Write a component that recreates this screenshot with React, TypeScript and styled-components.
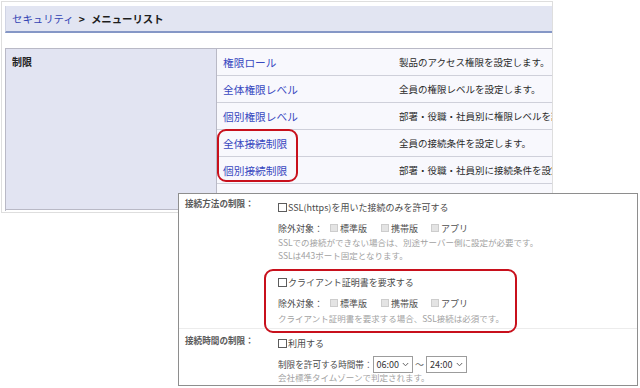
import React from "react";
import styled, { createGlobalStyle } from "styled-components";

const Global = createGlobalStyle`
  html, body { margin: 0; padding: 0; background: #fff; }
  body { font-family: "Noto Sans CJK JP", "Noto Sans", sans-serif; }
`;

const Stage = styled.div`
  position: relative;
  width: 640px;
  height: 388px;
  overflow: hidden;
  background: #fff;
`;

/* ---------- background screenshot ---------- */
const Screen = styled.div`
  margin: 1px 0 0 1px;
  width: 552px;
  height: 212px;
  box-sizing: border-box;
  border: 1px solid #dedede;
  padding: 4px 0 0 3px;
  overflow: hidden;
  display: flex;
  flex-direction: column;
`;

const HeaderBar = styled.div`
  height: 27px;
  flex: none;
  box-sizing: border-box;
  background: #e2e5f2;
  border-bottom: 2px solid #8597c6;
  border-left: 1px solid #d0d4e4;
  display: flex;
  align-items: center;
  padding-left: 6px;
  font-size: 10.4px;
  font-weight: bold;
  color: #1d1d1d;
  white-space: nowrap;
  margin-bottom: 15px;
`;

const Crumb = styled.span`
  color: #3444b4;
  font-weight: normal;
`;

const Sep = styled.span`
  margin: 0 6px 0 5px;
`;

const Table = styled.div`
  display: flex;
  width: 760px;
  flex: none;
  border-top: 1px solid #b9b9c6;
  border-left: 1px solid #b9b9c6;
`;

const GroupCell = styled.div`
  width: 211px;
  height: 161px;
  box-sizing: border-box;
  background: #e2e4f2;
  border-right: 1px solid #b9b9c6;
  border-bottom: 1px solid #b9b9c6;
  padding: 5px 6px;
  font-size: 10px;
  font-weight: bold;
  color: #222;
  line-height: 16px;
`;

const Rows = styled.div`
  display: flex;
  flex-direction: column;
  flex: 1;
`;

const Row = styled.div`
  display: grid;
  grid-template-columns: 182px 1fr;
  height: 27px;
  box-sizing: border-box;
  border-bottom: 1px solid #cfd0da;
  background: #f8f8fd;
  align-items: center;
  white-space: nowrap;
`;

const LinkCell = styled.span`
  padding-left: 6px;
  font-size: 10.7px;
  color: #3848c0;
`;

const DescCell = styled.span`
  font-size: 9.5px;
  color: #2a2a2a;
`;

/* ---------- overlay screenshot ---------- */
const Overlay = styled.div`
  position: absolute;
  left: 178px;
  top: 193px;
  width: 460px;
  height: 193px;
  box-sizing: border-box;
  border: 1px solid #8e8e8e;
  background: #fff;
  color: #4a4a4a;
  font-size: 9px;
`;

const SettingRow = styled.div<{ $divider?: boolean }>`
  display: grid;
  grid-template-columns: 98px 1fr;
  border-bottom: ${(p) => (p.$divider ? "1px solid #ececec" : "none")};
`;

const Label = styled.div<{ $top: number }>`
  padding: ${(p) => p.$top}px 0 0 6px;
  line-height: 12px;
  font-weight: bold;
  color: #5a5a5a;
  font-size: 8.6px;
  white-space: nowrap;
`;

const Content = styled.div<{ $top: number; $bottom: number }>`
  display: flex;
  flex-direction: column;
  padding: ${(p) => p.$top}px 0 ${(p) => p.$bottom}px 1px;
`;

const Line = styled.div<{ $gap?: number }>`
  display: flex;
  align-items: center;
  height: 14px;
  margin-top: ${(p) => p.$gap ?? 0}px;
  white-space: nowrap;
  font-size: 9px;
`;

const Note = styled.div<{ $gap?: number }>`
  font-size: 8.5px;
  line-height: 13px;
  color: #a2a2a2;
  margin-top: ${(p) => p.$gap ?? 0}px;
  white-space: nowrap;
`;

const Box = styled.span`
  display: inline-block;
  width: 7px;
  height: 7px;
  border: 1px solid #5c5c5c;
  margin-right: 1px;
  background: #fff;
  flex: none;
`;

const DisabledBox = styled.span`
  display: inline-block;
  width: 6px;
  height: 6px;
  border: 1px solid #cdcdcd;
  background: #e4e4e4;
  margin-right: 2px;
  flex: none;
`;

const Opt = styled.span<{ $gap: number }>`
  display: inline-flex;
  align-items: center;
  margin-left: ${(p) => p.$gap}px;
  color: #505050;
`;

const TimeLabel = styled.span`
  font-size: 8.6px;
`;

const Select = styled.span`
  display: inline-flex;
  align-items: center;
  height: 17px;
  box-sizing: border-box;
  border: 1px solid #9c9c9c;
  padding: 0 3px 0 3px;
  color: #333;
  font-size: 9px;
  gap: 3px;
`;

const Tilde = styled.span`
  margin: 0 2px;
  color: #666;
`;

const Highlight = styled.div<{ $l: number; $t: number; $w: number; $h: number }>`
  position: absolute;
  left: ${(p) => p.$l}px;
  top: ${(p) => p.$t}px;
  width: ${(p) => p.$w}px;
  height: ${(p) => p.$h}px;
  box-sizing: border-box;
  border: 2px solid #c8101c;
  border-radius: 9px;
  pointer-events: none;
`;

const Chevron = () => (
  <svg width="7" height="5" viewBox="0 0 7 5">
    <path d="M0.8 1 L3.5 3.8 L6.2 1" fill="none" stroke="#666" strokeWidth="1" />
  </svg>
);

const rows = [
  ["権限ロール", "製品のアクセス権限を設定します。"],
  ["全体権限レベル", "全員の権限レベルを設定します。"],
  ["個別権限レベル", "部署・役職・社員別に権限レベルを設定します。"],
  ["全体接続制限", "全員の接続条件を設定します。"],
  ["個別接続制限", "部署・役職・社員別に接続条件を設定します。"],
  ["接続制限ログ", "接続制限の履歴を確認します。"],
];

const Exclude = () => (
  <Line $gap={7}>
    <span>除外対象：</span>
    <Opt $gap={7}>
      <DisabledBox />
      標準版
    </Opt>
    <Opt $gap={14}>
      <DisabledBox />
      携帯版
    </Opt>
    <Opt $gap={13}>
      <DisabledBox />
      アプリ
    </Opt>
  </Line>
);

export default function App() {
  return (
    <Stage>
      <Global />
      <Screen>
        <HeaderBar>
          <Crumb>セキュリティ</Crumb>
          <Sep>&gt;</Sep>
          メニューリスト
        </HeaderBar>
        <Table>
          <GroupCell>制限</GroupCell>
          <Rows>
            {rows.map(([name, desc]) => (
              <Row key={name}>
                <LinkCell>{name}</LinkCell>
                <DescCell>{desc}</DescCell>
              </Row>
            ))}
          </Rows>
        </Table>
      </Screen>
      <Highlight $l={217} $t={129} $w={81} $h={53} />

      <Overlay>
        <SettingRow $divider>
          <Label $top={3}>接続方法の制限：</Label>
          <Content $top={6} $bottom={3}>
            <Line>
              <Box />
              SSL(https)を用いた接続のみを許可する
            </Line>
            <Exclude />
            <Note $gap={1}>
              SSLでの接続ができない場合は、別途サーバー側に設定が必要です。
              <br />
              SSLは443ポート固定となります。
            </Note>
            <Line $gap={13}>
              <Box />
              クライアント証明書を要求する
            </Line>
            <Exclude />
            <Note $gap={2}>クライアント証明書を要求する場合、SSL接続は必須です。</Note>
          </Content>
        </SettingRow>
        <SettingRow>
          <Label $top={5}>接続時間の制限：</Label>
          <Content $top={7} $bottom={0}>
            <Line>
              <Box />
              利用する
            </Line>
            <Line $gap={7}>
              <TimeLabel>制限を許可する時間帯：</TimeLabel>
              <Select>
                06:00
                <Chevron />
              </Select>
              <Tilde>～</Tilde>
              <Select>
                24:00
                <Chevron />
              </Select>
            </Line>
            <Note>会社標準タイムゾーンで判定されます。</Note>
          </Content>
        </SettingRow>
        <Highlight $l={85} $t={75} $w={253} $h={64} />
      </Overlay>
    </Stage>
  );
}
